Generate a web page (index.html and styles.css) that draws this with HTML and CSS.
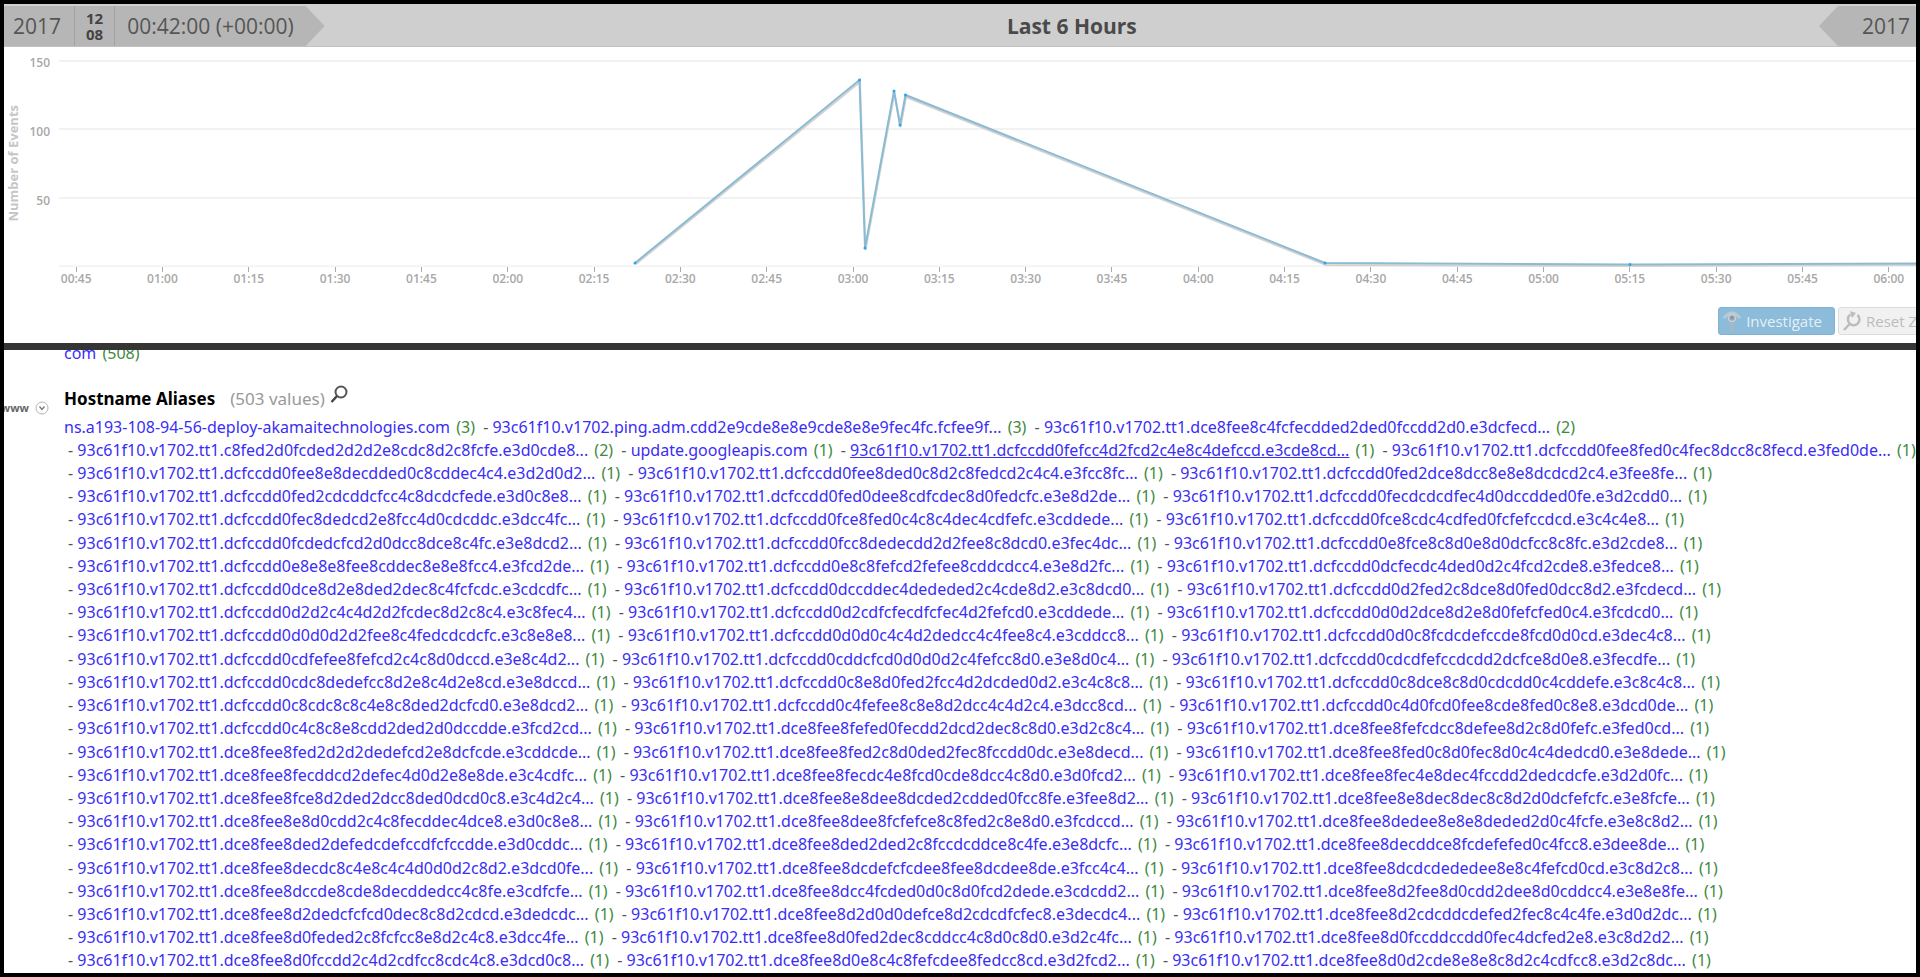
FILE: index.html
```html
<!DOCTYPE html>
<html lang="en">
<head>
<meta charset="utf-8">
<title>Last 6 Hours</title>
<link rel="stylesheet" href="styles.css">
</head>
<body>
<header class="timebar">
  <div class="tag tag-start">
    <span class="year">2017</span>
    <span class="day"><span>12</span><span>08</span></span>
    <span class="clock">00:42:00 (+00:00)</span>
  </div>
  <h1 class="range">Last 6 Hours</h1>
  <div class="tag tag-end"><span class="year">2017</span></div>
</header>

<section class="timeline">
  <div class="chart">
    <div class="axis-title"><span>Number of Events</span></div>
    <div class="y-axis"><span>150</span><span>100</span><span>50</span></div>
    <div class="plot">
      <svg viewBox="0 0 1857 207" preserveAspectRatio="none" aria-hidden="true">
        <path class="grid" d="M0 1H1857M0 69H1857M0 138H1857M0 206.500H1857"/>
        <path class="shade" d="M577 204L801 22L806.500 190L835.500 33L841.500 67L847 37L1267 205L1572 206L1857 205"/>
        <path class="series" d="M576 203L800.500 20L806 188L835 31L841 65L846.500 35L1266 203L1571 204.500L1857 203.500"/>
        <path class="points" d="M576 203h.01M800.500 20h.01M806 188h.01M835 31h.01M841 65h.01M846.500 35h.01M1266 203h.01M1571 204.500h.01"/>
      </svg>
    </div>
  </div>
  <div class="x-axis">
    <span>00:45</span><span>01:00</span><span>01:15</span><span>01:30</span><span>01:45</span><span>02:00</span><span>02:15</span><span>02:30</span><span>02:45</span><span>03:00</span><span>03:15</span><span>03:30</span><span>03:45</span><span>04:00</span><span>04:15</span><span>04:30</span><span>04:45</span><span>05:00</span><span>05:15</span><span>05:30</span><span>05:45</span><span>06:00</span>
  </div>
  <div class="actions">
    <button class="btn primary" type="button">
      <svg width="18" height="22" viewBox="0 0 18 22" aria-hidden="true"><path d="M1 8Q9-2 17 8" fill="none" stroke="#b9c9d2" stroke-width="3"/><circle cx="9" cy="8" r="3.500" fill="#8fa9bb" stroke="#c6d3da" stroke-width="1.500"/><circle cx="9" cy="7.500" r="1.200" fill="#a77f8c"/><path d="M9 12V21" stroke="#a9b8c1" stroke-width="3.500"/></svg>
      Investigate
    </button>
    <button class="btn" type="button">
      <svg width="18" height="20" viewBox="0 0 18 20" aria-hidden="true"><path d="M7.500 3.500A5.800 5.800 0 1 0 14.500 4M7 12.500L1 19" fill="none" stroke="#bdbdbd" stroke-width="2.500"/><path d="M7 0L13 2L9 7Z" fill="#bdbdbd"/></svg>
      Reset Zoom
    </button>
  </div>
</section>

<main class="values">
  <div class="previous"><a href="#">com</a> <em>(508)</em></div>
  <div class="heading">
    <div class="meta">
      <span class="www">www</span>
      <svg width="14" height="14" viewBox="0 0 14 14" aria-hidden="true"><circle cx="7" cy="7" r="6" fill="#fff" stroke="#b5b5b5"/><path d="M4.500 5.500L7 8.500L9.500 5.500" fill="none" stroke="#777" stroke-width="1.300"/></svg>
    </div>
    <h2>Hostname Aliases</h2>
    <span class="total">(503 values)</span>
    <svg class="search" width="18" height="19" viewBox="0 0 18 19" aria-hidden="true"><circle cx="11" cy="7" r="5.500" fill="#fff" stroke="#555" stroke-width="2"/><path d="M7 11L1.500 17" stroke="#444" stroke-width="2.500"/></svg>
  </div>
  <div class="rows">
    <div><a href="#">ns.a193-108-94-56-deploy-akamaitechnologies.com</a> <em>(3)</em> <i>-</i> <a href="#">93c61f10.v1702.ping.adm.cdd2e9cde8e8e9cde8e8e9fec4fc.fcfee9f...</a> <em>(3)</em> <i>-</i> <a href="#">93c61f10.v1702.tt1.dce8fee8c4fcfecdded2ded0fccdd2d0.e3dcfecd...</a> <em>(2)</em></div>
    <div><i>-</i> <a href="#">93c61f10.v1702.tt1.c8fed2d0fcded2d2d2e8cdc8d2c8fcfe.e3d0cde8...</a> <em>(2)</em> <i>-</i> <a href="#">update.googleapis.com</a> <em>(1)</em> <i>-</i> <a class="active" href="#">93c61f10.v1702.tt1.dcfccdd0fefcc4d2fcd2c4e8c4defccd.e3cde8cd...</a> <em>(1)</em> <i>-</i> <a href="#">93c61f10.v1702.tt1.dcfccdd0fee8fed0c4fec8dcc8c8fecd.e3fed0de...</a> <em>(1)</em></div>
    <div><i>-</i> <a href="#">93c61f10.v1702.tt1.dcfccdd0fee8e8decdded0c8cddec4c4.e3d2d0d2...</a> <em>(1)</em> <i>-</i> <a href="#">93c61f10.v1702.tt1.dcfccdd0fee8ded0c8d2c8fedcd2c4c4.e3fcc8fc...</a> <em>(1)</em> <i>-</i> <a href="#">93c61f10.v1702.tt1.dcfccdd0fed2dce8dcc8e8e8dcdcd2c4.e3fee8fe...</a> <em>(1)</em></div>
    <div><i>-</i> <a href="#">93c61f10.v1702.tt1.dcfccdd0fed2cdcddcfcc4c8dcdcfede.e3d0c8e8...</a> <em>(1)</em> <i>-</i> <a href="#">93c61f10.v1702.tt1.dcfccdd0fed0dee8cdfcdec8d0fedcfc.e3e8d2de...</a> <em>(1)</em> <i>-</i> <a href="#">93c61f10.v1702.tt1.dcfccdd0fecdcdcdfec4d0dccdded0fe.e3d2cdd0...</a> <em>(1)</em></div>
    <div><i>-</i> <a href="#">93c61f10.v1702.tt1.dcfccdd0fec8dedcd2e8fcc4d0cdcddc.e3dcc4fc...</a> <em>(1)</em> <i>-</i> <a href="#">93c61f10.v1702.tt1.dcfccdd0fce8fed0c4c8c4dec4cdfefc.e3cddede...</a> <em>(1)</em> <i>-</i> <a href="#">93c61f10.v1702.tt1.dcfccdd0fce8cdc4cdfed0fcfefccdcd.e3c4c4e8...</a> <em>(1)</em></div>
    <div><i>-</i> <a href="#">93c61f10.v1702.tt1.dcfccdd0fcdedcfcd2d0dcc8dce8c4fc.e3e8dcd2...</a> <em>(1)</em> <i>-</i> <a href="#">93c61f10.v1702.tt1.dcfccdd0fcc8dedecdd2d2fee8c8dcd0.e3fec4dc...</a> <em>(1)</em> <i>-</i> <a href="#">93c61f10.v1702.tt1.dcfccdd0e8fce8c8d0e8d0dcfcc8c8fc.e3d2cde8...</a> <em>(1)</em></div>
    <div><i>-</i> <a href="#">93c61f10.v1702.tt1.dcfccdd0e8e8e8fee8cddec8e8e8fcc4.e3fcd2de...</a> <em>(1)</em> <i>-</i> <a href="#">93c61f10.v1702.tt1.dcfccdd0e8c8fefcd2fefee8cddcdcc4.e3e8d2fc...</a> <em>(1)</em> <i>-</i> <a href="#">93c61f10.v1702.tt1.dcfccdd0dcfecdc4ded0d2c4fcd2cde8.e3fedce8...</a> <em>(1)</em></div>
    <div><i>-</i> <a href="#">93c61f10.v1702.tt1.dcfccdd0dce8d2e8ded2dec8c4fcfcdc.e3cdcdfc...</a> <em>(1)</em> <i>-</i> <a href="#">93c61f10.v1702.tt1.dcfccdd0dccddec4dededed2c4cde8d2.e3c8dcd0...</a> <em>(1)</em> <i>-</i> <a href="#">93c61f10.v1702.tt1.dcfccdd0d2fed2c8dce8d0fed0dcc8d2.e3fcdecd...</a> <em>(1)</em></div>
    <div><i>-</i> <a href="#">93c61f10.v1702.tt1.dcfccdd0d2d2c4c4d2d2fcdec8d2c8c4.e3c8fec4...</a> <em>(1)</em> <i>-</i> <a href="#">93c61f10.v1702.tt1.dcfccdd0d2cdfcfecdfcfec4d2fefcd0.e3cddede...</a> <em>(1)</em> <i>-</i> <a href="#">93c61f10.v1702.tt1.dcfccdd0d0d2dce8d2e8d0fefcfed0c4.e3fcdcd0...</a> <em>(1)</em></div>
    <div><i>-</i> <a href="#">93c61f10.v1702.tt1.dcfccdd0d0d0d2d2fee8c4fedcdcdcfc.e3c8e8e8...</a> <em>(1)</em> <i>-</i> <a href="#">93c61f10.v1702.tt1.dcfccdd0d0d0c4c4d2dedcc4c4fee8c4.e3cddcc8...</a> <em>(1)</em> <i>-</i> <a href="#">93c61f10.v1702.tt1.dcfccdd0d0c8fcdcdefccde8fcd0d0cd.e3dec4c8...</a> <em>(1)</em></div>
    <div><i>-</i> <a href="#">93c61f10.v1702.tt1.dcfccdd0cdfefee8fefcd2c4c8d0dccd.e3e8c4d2...</a> <em>(1)</em> <i>-</i> <a href="#">93c61f10.v1702.tt1.dcfccdd0cddcfcd0d0d0d2c4fefcc8d0.e3e8d0c4...</a> <em>(1)</em> <i>-</i> <a href="#">93c61f10.v1702.tt1.dcfccdd0cdcdfefccdcdd2dcfce8d0e8.e3fecdfe...</a> <em>(1)</em></div>
    <div><i>-</i> <a href="#">93c61f10.v1702.tt1.dcfccdd0cdc8dedefcc8d2e8c4d2e8cd.e3e8dccd...</a> <em>(1)</em> <i>-</i> <a href="#">93c61f10.v1702.tt1.dcfccdd0c8e8d0fed2fcc4d2dcded0d2.e3c4c8c8...</a> <em>(1)</em> <i>-</i> <a href="#">93c61f10.v1702.tt1.dcfccdd0c8dce8c8d0cdcdd0c4cddefe.e3c8c4c8...</a> <em>(1)</em></div>
    <div><i>-</i> <a href="#">93c61f10.v1702.tt1.dcfccdd0c8cdc8c8c4e8c8ded2dcfcd0.e3e8dcd2...</a> <em>(1)</em> <i>-</i> <a href="#">93c61f10.v1702.tt1.dcfccdd0c4fefee8c8e8d2dcc4c4d2c4.e3dcc8cd...</a> <em>(1)</em> <i>-</i> <a href="#">93c61f10.v1702.tt1.dcfccdd0c4d0fcd0fee8cde8fed0c8e8.e3dcd0de...</a> <em>(1)</em></div>
    <div><i>-</i> <a href="#">93c61f10.v1702.tt1.dcfccdd0c4c8c8e8cdd2ded2d0dccdde.e3fcd2cd...</a> <em>(1)</em> <i>-</i> <a href="#">93c61f10.v1702.tt1.dce8fee8fefed0fecdd2dcd2dec8c8d0.e3d2c8c4...</a> <em>(1)</em> <i>-</i> <a href="#">93c61f10.v1702.tt1.dce8fee8fefcdcc8defee8d2c8d0fefc.e3fed0cd...</a> <em>(1)</em></div>
    <div><i>-</i> <a href="#">93c61f10.v1702.tt1.dce8fee8fed2d2d2dedefcd2e8dcfcde.e3cddcde...</a> <em>(1)</em> <i>-</i> <a href="#">93c61f10.v1702.tt1.dce8fee8fed2c8d0ded2fec8fccdd0dc.e3e8decd...</a> <em>(1)</em> <i>-</i> <a href="#">93c61f10.v1702.tt1.dce8fee8fed0c8d0fec8d0c4c4dedcd0.e3e8dede...</a> <em>(1)</em></div>
    <div><i>-</i> <a href="#">93c61f10.v1702.tt1.dce8fee8fecddcd2defec4d0d2e8e8de.e3c4cdfc...</a> <em>(1)</em> <i>-</i> <a href="#">93c61f10.v1702.tt1.dce8fee8fecdc4e8fcd0cde8dcc4c8d0.e3d0fcd2...</a> <em>(1)</em> <i>-</i> <a href="#">93c61f10.v1702.tt1.dce8fee8fec4e8dec4fccdd2dedcdcfe.e3d2d0fc...</a> <em>(1)</em></div>
    <div><i>-</i> <a href="#">93c61f10.v1702.tt1.dce8fee8fce8d2ded2dcc8ded0dcd0c8.e3c4d2c4...</a> <em>(1)</em> <i>-</i> <a href="#">93c61f10.v1702.tt1.dce8fee8e8dee8dcded2cdded0fcc8fe.e3fee8d2...</a> <em>(1)</em> <i>-</i> <a href="#">93c61f10.v1702.tt1.dce8fee8e8dec8dec8c8d2d0dcfefcfc.e3e8fcfe...</a> <em>(1)</em></div>
    <div><i>-</i> <a href="#">93c61f10.v1702.tt1.dce8fee8e8d0cdd2c4c8fecddec4dce8.e3d0c8e8...</a> <em>(1)</em> <i>-</i> <a href="#">93c61f10.v1702.tt1.dce8fee8dee8fcfefce8c8fed2c8e8d0.e3fcdccd...</a> <em>(1)</em> <i>-</i> <a href="#">93c61f10.v1702.tt1.dce8fee8dedee8e8e8deded2d0c4fcfe.e3e8c8d2...</a> <em>(1)</em></div>
    <div><i>-</i> <a href="#">93c61f10.v1702.tt1.dce8fee8ded2defedcdefccdfcfccdde.e3d0cddc...</a> <em>(1)</em> <i>-</i> <a href="#">93c61f10.v1702.tt1.dce8fee8ded2ded2c8fccdcddce8c4fe.e3e8dcfc...</a> <em>(1)</em> <i>-</i> <a href="#">93c61f10.v1702.tt1.dce8fee8decddce8fcdefefed0c4fcc8.e3dee8de...</a> <em>(1)</em></div>
    <div><i>-</i> <a href="#">93c61f10.v1702.tt1.dce8fee8decdc8c4e8c4c4d0d0d2c8d2.e3dcd0fe...</a> <em>(1)</em> <i>-</i> <a href="#">93c61f10.v1702.tt1.dce8fee8dcdefcfcdee8fee8dcdee8de.e3fcc4c4...</a> <em>(1)</em> <i>-</i> <a href="#">93c61f10.v1702.tt1.dce8fee8dcdcdededee8e8c4fefcd0cd.e3c8d2c8...</a> <em>(1)</em></div>
    <div><i>-</i> <a href="#">93c61f10.v1702.tt1.dce8fee8dccde8cde8decddedcc4c8fe.e3cdfcfe...</a> <em>(1)</em> <i>-</i> <a href="#">93c61f10.v1702.tt1.dce8fee8dcc4fcded0d0c8d0fcd2dede.e3cdcdd2...</a> <em>(1)</em> <i>-</i> <a href="#">93c61f10.v1702.tt1.dce8fee8d2fee8d0cdd2dee8d0cddcc4.e3e8e8fe...</a> <em>(1)</em></div>
    <div><i>-</i> <a href="#">93c61f10.v1702.tt1.dce8fee8d2dedcfcfcd0dec8c8d2cdcd.e3dedcdc...</a> <em>(1)</em> <i>-</i> <a href="#">93c61f10.v1702.tt1.dce8fee8d2d0d0defce8d2cdcdfcfec8.e3decdc4...</a> <em>(1)</em> <i>-</i> <a href="#">93c61f10.v1702.tt1.dce8fee8d2cdcddcdefed2fec8c4c4fe.e3d0d2dc...</a> <em>(1)</em></div>
    <div><i>-</i> <a href="#">93c61f10.v1702.tt1.dce8fee8d0feded2c8fcfcc8e8d2c4c8.e3dcc4fe...</a> <em>(1)</em> <i>-</i> <a href="#">93c61f10.v1702.tt1.dce8fee8d0fed2dec8cddcc4c8d0c8d0.e3d2c4fc...</a> <em>(1)</em> <i>-</i> <a href="#">93c61f10.v1702.tt1.dce8fee8d0fccddccdd0fec4dcfed2e8.e3c8d2d2...</a> <em>(1)</em></div>
    <div><i>-</i> <a href="#">93c61f10.v1702.tt1.dce8fee8d0fccdd2c4d2cdfcc8cdc4c8.e3dcd0c8...</a> <em>(1)</em> <i>-</i> <a href="#">93c61f10.v1702.tt1.dce8fee8d0e8c4c8fefcdee8fedcc8cd.e3d2fcd2...</a> <em>(1)</em> <i>-</i> <a href="#">93c61f10.v1702.tt1.dce8fee8d0d2cde8e8e8c8d2c4cdfcc8.e3d2c8dc...</a> <em>(1)</em></div>
  </div>
</main>
</body>
</html>
```
FILE: styles.css
```css
* { box-sizing: border-box; }
body {
  margin: 0;
  height: 100vh;
  display: flex;
  flex-direction: column;
  overflow: hidden;
  border: 4px solid #000;
  background: #fff;
  color: #555;
  font-family: "Open Sans", "Noto Sans", sans-serif;
  font-size: 16px;
}

/* time range bar */
.timebar {
  display: flex;
  flex: none;
  height: 43px;
  padding-top: 2px;
  background: #cfcfcf;
  border-bottom: 1px solid #c2c2c2;
}
.tag {
  display: flex;
  align-items: center;
  height: 40px;
  background: #b6b6b6;
  font-size: 21px;
  line-height: 38px;
}
.tag-start {
  padding-right: 31px;
  clip-path: polygon(0 0, calc(100% - 19px) 0, 100% 50%, calc(100% - 19px) 100%, 0 100%);
}
.tag-end {
  padding: 0 6px 0 43px;
  clip-path: polygon(19px 0, 100% 0, 100% 100%, 19px 100%, 0 50%);
}
.tag-start .year { padding: 0 13px 0 9px; }
.day {
  display: flex;
  flex-direction: column;
  justify-content: center;
  height: 40px;
  padding: 0 11px;
  border: solid #a2a2a2;
  border-width: 0 1px;
  color: #444;
  font-size: 15px;
  font-weight: 700;
  line-height: 16px;
}
.clock { padding-left: 12px; }
.range {
  flex: 1;
  margin: 0;
  color: #4a4a4a;
  font-size: 21px;
  font-weight: 700;
  line-height: 41px;
  text-align: center;
}

/* chart */
.timeline {
  flex: none;
  overflow: hidden;
  padding-top: 13px;
  border-bottom: 7px solid #353535;
}
.chart { display: flex; height: 207px; }
.axis-title {
  display: flex;
  align-items: center;
  justify-content: center;
  width: 18px;
  color: #c6c6c6;
  font-size: 13px;
  font-weight: 700;
}
.axis-title span {
  writing-mode: vertical-rl;
  transform: rotate(180deg);
}
.y-axis {
  display: grid;
  grid-template-rows: repeat(3, 1fr);
  width: 28px;
  color: #a8a8a8;
  font-size: 12px;
  font-weight: 600;
  line-height: 6px;
  text-align: right;
}
.plot { flex: 1; margin-left: 9px; }
.plot svg { display: block; width: 100%; height: 100%; }
.plot path { fill: none; vector-effect: non-scaling-stroke; }
.plot .grid { stroke: #f2f2f2; stroke-width: 2; }
.plot .shade { stroke: #d6d2d0; stroke-width: 2; }
.plot .series { stroke: #8abbd4; stroke-width: 2; }
.plot .points { stroke: #2ea3ef; stroke-width: 3; stroke-linecap: round; }
.x-axis {
  display: grid;
  grid-template-columns: repeat(22, 1fr);
  margin: 0 -16px 0 29px;
  color: #a8a8a8;
  font-size: 12px;
  font-weight: 600;
  line-height: 14px;
  text-align: center;
}
.x-axis span::before {
  content: "";
  display: block;
  width: 1px;
  height: 5px;
  margin: 0 auto;
  background: #aaa;
}
.actions {
  display: flex;
  justify-content: flex-end;
  gap: 3px;
  margin: 21px -46px 8px 0;
}
.btn {
  display: flex;
  align-items: center;
  gap: 5px;
  height: 28px;
  padding: 0 12px 0 4px;
  border: 1px solid #dcdcdc;
  border-radius: 3px;
  background: #f1f1f1;
  color: #bcbcbc;
  font: 15px "Open Sans", "Noto Sans", sans-serif;
}
.primary {
  border-color: #7fb2d3;
  background: #8cbcda;
  color: #e4eff6;
}

/* value list */
.values {
  flex: 1;
  min-height: 0;
  display: flex;
  flex-direction: column;
  overflow: hidden;
  padding: 0 0 1px 60px;
  font-family: "Noto Sans", "Open Sans", sans-serif;
  white-space: nowrap;
}
.previous { margin-top: -8px; line-height: 23px; }
a { color: #3a2ef5; text-decoration: none; }
.active { text-decoration: underline; }
em { margin-left: 2px; color: #3f8a3f; font-style: normal; }
i { margin-left: 4px; color: #555; font-style: normal; }
.heading {
  display: flex;
  align-items: center;
  margin: 18px 0 0 -60px;
  line-height: 24px;
}
.meta {
  display: flex;
  align-items: center;
  justify-content: flex-end;
  gap: 6px;
  width: 45px;
  margin: 18px 15px 0 0;
  line-height: 8px;
}
.meta svg { flex: none; }
.www {
  color: #666;
  font-size: 11px;
  font-weight: 700;
}
h2 { margin: 0; color: #000; font-size: 17px; font-weight: 700; }
.total { margin: 0 5px 0 15px; color: #999; font-size: 17px; }
.search { margin-bottom: 10px; }
.rows {
  flex: 1;
  min-height: 0;
  display: grid;
  grid-auto-rows: 1fr;
  align-items: center;
  line-height: 22px;
}
```
